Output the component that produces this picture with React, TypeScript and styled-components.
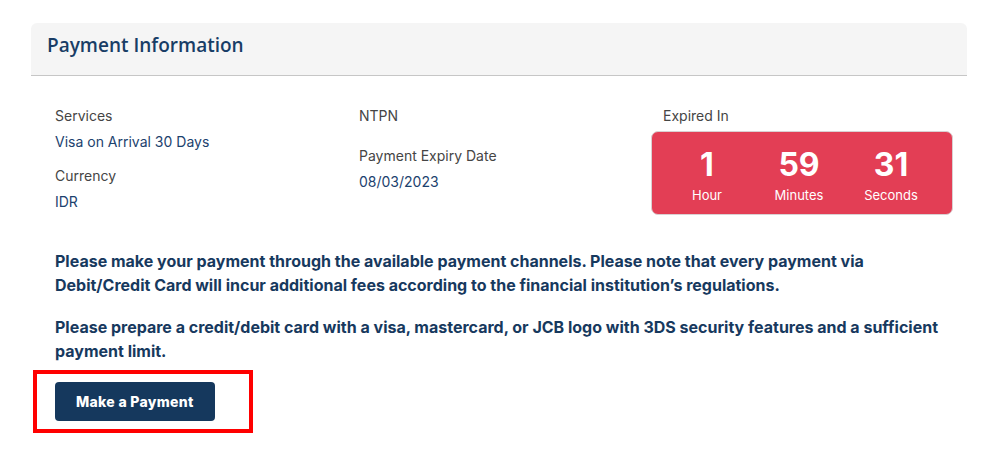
import styled, { createGlobalStyle } from "styled-components";

type Field = {
  label: string;
  value?: string;
};

type TimePart = {
  amount: number;
  unit: string;
};

const COLUMNS: Field[][] = [
  [
    { label: "Services", value: "Visa on Arrival 30 Days" },
    { label: "Currency", value: "IDR" },
  ],
  [
    { label: "NTPN", value: "" },
    { label: "Payment Expiry Date", value: "08/03/2023" },
  ],
];

const COUNTDOWN: TimePart[] = [
  { amount: 1, unit: "Hour" },
  { amount: 59, unit: "Minutes" },
  { amount: 31, unit: "Seconds" },
];

const GlobalStyle = createGlobalStyle`
  body {
    margin: 0;
    background: #ffffff;
    font-family: Inter, "Liberation Sans", sans-serif;
  }
`;

const App = () => {
  return (
    <>
      <GlobalStyle />
      <Page>
        <Card>
          <Header>
            <Title>Payment Information</Title>
          </Header>
          <Body>
            <Details>
              {COLUMNS.map((fields, i) => (
                <Column key={i}>
                  {fields.map((f) => (
                    <FieldBlock key={f.label}>
                      <Label>{f.label}</Label>
                      <Value>{f.value}</Value>
                    </FieldBlock>
                  ))}
                </Column>
              ))}
              <Column>
                <Label indent>Expired In</Label>
                <Countdown>
                  {COUNTDOWN.map((t) => (
                    <TimeCell key={t.unit}>
                      <Amount>{t.amount}</Amount>
                      <Unit>{t.unit}</Unit>
                    </TimeCell>
                  ))}
                </Countdown>
              </Column>
            </Details>
            <Notice>
              Please make your payment through the available payment channels.
              Please note that every payment via Debit/Credit Card will incur
              additional fees according to the financial institution’s
              regulations.
            </Notice>
            <Notice>
              Please prepare a credit/debit card with a visa, mastercard, or JCB
              logo with 3DS security features and a sufficient payment limit.
            </Notice>
            <Highlight>
              <PayButton>Make a Payment</PayButton>
            </Highlight>
          </Body>
        </Card>
      </Page>
    </>
  );
};

const Page = styled.div`
  padding: 23px 39px 0 31px;
`;
const Card = styled.div`
  width: 936px;
`;
const Header = styled.div`
  box-sizing: border-box;
  height: 53px;
  display: flex;
  align-items: center;
  padding: 0 16px 9px;
  background: #f5f5f5;
  border-top-left-radius: 6px;
  border-top-right-radius: 6px;
  border-bottom: 1px solid #c6c6c6;
`;
const Title = styled.h2`
  margin: 0;
  font-family: "Open Sans", "Noto Sans", sans-serif;
  font-size: 19px;
  font-weight: 600;
  color: #183d66;
`;
const Body = styled.div`
  padding: 30px 24px 0;
`;
const Details = styled.div`
  display: grid;
  grid-template-columns: 304px 292px 302px;
`;
const Column = styled.div`
  display: flex;
  flex-direction: column;
`;
const FieldBlock = styled.div`
  display: flex;
  flex-direction: column;
  margin-bottom: 14px;
`;
const Label = styled.span<{ indent?: boolean }>`
  font-size: 14px;
  line-height: 20px;
  color: #454545;
  padding-left: ${(p) => (p.indent ? "12px" : "0")};
`;
const Value = styled.span`
  margin-top: 6px;
  font-size: 14px;
  line-height: 20px;
  color: #1c426e;
  &:empty {
    line-height: 0;
  }
`;
const Countdown = styled.div`
  box-sizing: border-box;
  margin-top: 5px;
  height: 84px;
  display: flex;
  justify-content: center;
  align-items: center;
  padding: 4px 6px 0 0;
  background: #e33e55;
  border: 1px solid #d9d0d2;
  border-radius: 7px;
`;
const TimeCell = styled.div`
  width: 92px;
  display: flex;
  flex-direction: column;
  align-items: center;
  color: #ffffff;
`;
const Amount = styled.span`
  font-size: 32px;
  font-weight: 700;
  line-height: 36px;
`;
const Unit = styled.span`
  margin-top: 4px;
  font-size: 13px;
  line-height: 16px;
`;
const Notice = styled.p`
  margin: 0 0 18px;
  font-size: 16px;
  font-weight: 700;
  line-height: 24px;
  color: #17395e;
  &:first-of-type {
    margin-top: 23px;
  }
`;
const Highlight = styled.div`
  display: inline-block;
  margin: -11px 0 0 -22px;
  padding: 8px 34px 8px 18px;
  border: 4px solid #ff0000;
`;
const PayButton = styled.button`
  height: 39px;
  padding: 0 21px;
  border: none;
  border-radius: 4px;
  background: #15385d;
  color: #ffffff;
  font-family: Inter, "Liberation Sans", sans-serif;
  font-size: 14px;
  font-weight: 800;
  letter-spacing: 0.3px;
  cursor: pointer;
`;

export default App;
